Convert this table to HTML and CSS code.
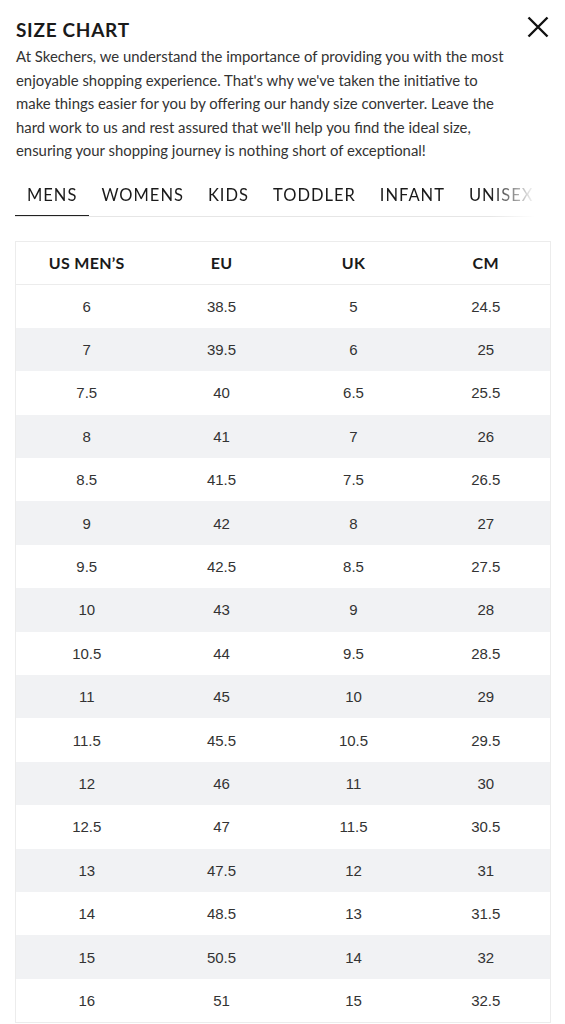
FILE: index.html
```html
<!DOCTYPE html>
<html>
	<head>
		<meta charset="UTF-8">
		<title>Size Chart</title>
		<link rel="stylesheet" href="styles.css">
	</head>
	<body>
		<div class="modal">
			<div class="head">
				<h2>SIZE CHART</h2>
				<div class="close">
					<svg width="22" height="22" viewBox="0 0 22 22"><path d="M1.5 1.5L20.5 20.5M20.5 1.5L1.5 20.5" stroke="#111" stroke-width="2.4" fill="none"/></svg>
				</div>
			</div>
			<p class="intro">At Skechers, we understand the importance of providing you with the most enjoyable shopping experience. That's why we've taken the initiative to make things easier for you by offering our handy size converter. Leave the hard work to us and rest assured that we'll help you find the ideal size, ensuring your shopping journey is nothing short of exceptional!</p>
			<div class="tabs">
				<div class="tab active">MENS</div>
				<div class="tab">WOMENS</div>
				<div class="tab">KIDS</div>
				<div class="tab">TODDLER</div>
				<div class="tab">INFANT</div>
				<div class="tab">UNISEX</div>
			</div>
			<table class="chart">
				<colgroup>
					<col class="c1"><col class="c2"><col class="c3"><col class="c4">
				</colgroup>
				<thead>
					<tr><th>US MEN’S</th><th>EU</th><th>UK</th><th>CM</th></tr>
				</thead>
				<tbody>
					<tr><td>6</td><td>38.5</td><td>5</td><td>24.5</td></tr>
					<tr><td>7</td><td>39.5</td><td>6</td><td>25</td></tr>
					<tr><td>7.5</td><td>40</td><td>6.5</td><td>25.5</td></tr>
					<tr><td>8</td><td>41</td><td>7</td><td>26</td></tr>
					<tr><td>8.5</td><td>41.5</td><td>7.5</td><td>26.5</td></tr>
					<tr><td>9</td><td>42</td><td>8</td><td>27</td></tr>
					<tr><td>9.5</td><td>42.5</td><td>8.5</td><td>27.5</td></tr>
					<tr><td>10</td><td>43</td><td>9</td><td>28</td></tr>
					<tr><td>10.5</td><td>44</td><td>9.5</td><td>28.5</td></tr>
					<tr><td>11</td><td>45</td><td>10</td><td>29</td></tr>
					<tr><td>11.5</td><td>45.5</td><td>10.5</td><td>29.5</td></tr>
					<tr><td>12</td><td>46</td><td>11</td><td>30</td></tr>
					<tr><td>12.5</td><td>47</td><td>11.5</td><td>30.5</td></tr>
					<tr><td>13</td><td>47.5</td><td>12</td><td>31</td></tr>
					<tr><td>14</td><td>48.5</td><td>13</td><td>31.5</td></tr>
					<tr><td>15</td><td>50.5</td><td>14</td><td>32</td></tr>
					<tr><td>16</td><td>51</td><td>15</td><td>32.5</td></tr>
				</tbody>
			</table>
		</div>
	</body>
</html>
```

FILE: styles.css
```css
body{
	margin: 0;
	background-color: #fff;
	font-family: Lato, "Open Sans", sans-serif;
	color: #222;
}
.modal{
	padding: 14px 15px 0 15px;
}
.head{
	display: flex;
	justify-content: space-between;
	align-items: flex-start;
}
.head h2{
	margin: 0;
	padding-left: 1px;
	font-size: 19px;
	font-weight: 700;
	letter-spacing: 0.7px;
	line-height: 31px;
	color: #1a1a1a;
}
.close{
	width: 22px;
	height: 22px;
	margin: 2px 1px 0 0;
	cursor: pointer;
}
.intro{
	margin: 0;
	max-width: 500px;
	padding-left: 1px;
	font-size: 14.9px;
	line-height: 23.5px;
	color: #333;
}
.tabs{
	display: flex;
	gap: 24px;
	margin-top: 12px;
	padding-left: 12px;
	border-bottom: 1px solid #e6e6e6;
	width: 508px;
	overflow: hidden;
	white-space: nowrap;
	-webkit-mask-image: linear-gradient(to right, #000 0, #000 475px, transparent 520px);
	mask-image: linear-gradient(to right, #000 0, #000 475px, transparent 520px);
}
.tab{
	font-size: 16.5px;
	letter-spacing: 1px;
	line-height: 20px;
	padding: 10px 0 11px 0;
	color: #1a1a1a;
	position: relative;
}
.tab.active::after{
	content: "";
	position: absolute;
	left: -12px;
	right: -12px;
	bottom: -1px;
	height: 2px;
	background-color: #222;
}
.chart{
	width: 535px;
	margin-top: 24px;
	border-collapse: collapse;
	border: 1px solid #ececec;
	table-layout: fixed;
}
.c1{ width: 142px; }
.c2{ width: 128px; }
.c3{ width: 136px; }
.c4{ width: 129px; }
.chart th{
	height: 42px;
	padding: 0;
	font-size: 16px;
	font-weight: 700;
	letter-spacing: 0.3px;
	color: #1a1a1a;
	border-bottom: 1px solid #ececec;
}
.chart td{
	height: 43.4px;
	padding: 0;
	text-align: center;
	font-family: "Liberation Sans", Arial, sans-serif;
	font-size: 15px;
	color: #333;
}
.chart tbody tr:nth-child(even){
	background-color: #f1f2f4;
}
```
